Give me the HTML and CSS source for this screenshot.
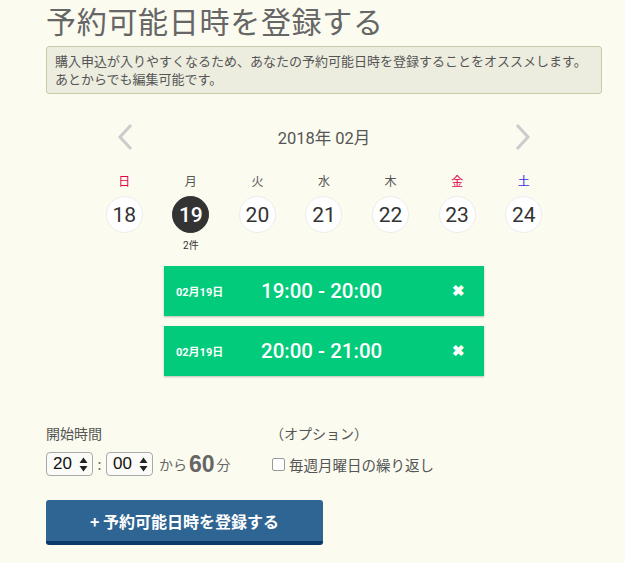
FILE: index.html
```html
<!DOCTYPE html>
<html lang="ja">
<head>
<meta charset="utf-8">
<title>予約可能日時を登録する</title>
<link rel="stylesheet" href="styles.css">
</head>
<body>
<div class="page">
  <h1 class="title">予約可能日時を登録する</h1>
  <div class="notice">購入申込が入りやすくなるため、あなたの予約可能日時を登録することをオススメします。<br>あとからでも編集可能です。</div>

  <div class="calendar">
    <div class="cal-head">
      <svg class="arrow" width="16" height="28" viewBox="0 0 16 28"><polyline points="14,2 3,14 14,26" fill="none" stroke="#cccccc" stroke-width="3"/></svg>
      <span class="month">2018年 02月</span>
      <svg class="arrow" width="16" height="28" viewBox="0 0 16 28"><polyline points="2,2 13,14 2,26" fill="none" stroke="#cccccc" stroke-width="3"/></svg>
    </div>
    <div class="days">
      <div class="day"><span class="wd sun">日</span><span class="num">18</span><span class="cnt"></span></div>
      <div class="day"><span class="wd">月</span><span class="num active">19</span><span class="cnt">2件</span></div>
      <div class="day"><span class="wd">火</span><span class="num">20</span><span class="cnt"></span></div>
      <div class="day"><span class="wd">水</span><span class="num">21</span><span class="cnt"></span></div>
      <div class="day"><span class="wd">木</span><span class="num">22</span><span class="cnt"></span></div>
      <div class="day"><span class="wd red">金</span><span class="num">23</span><span class="cnt"></span></div>
      <div class="day"><span class="wd sat">土</span><span class="num">24</span><span class="cnt"></span></div>
    </div>
    <div class="slots">
      <div class="slot"><span class="sdate">02月19日</span><span class="stime">19:00 - 20:00</span><span class="sdel">✖</span></div>
      <div class="slot"><span class="sdate">02月19日</span><span class="stime">20:00 - 21:00</span><span class="sdel">✖</span></div>
    </div>
  </div>

  <div class="form">
    <div class="col-left">
      <div class="label">開始時間</div>
      <div class="time-row">
        <div class="sel"><span>20</span><svg width="9" height="15" viewBox="0 0 9 15"><path d="M4.5 0.5 L8.5 6 L0.5 6 Z M4.5 14.5 L8.5 9 L0.5 9 Z" fill="#222"/></svg></div>
        <span class="colon">:</span>
        <div class="sel"><span>00</span><svg width="9" height="15" viewBox="0 0 9 15"><path d="M4.5 0.5 L8.5 6 L0.5 6 Z M4.5 14.5 L8.5 9 L0.5 9 Z" fill="#222"/></svg></div>
        <span class="kara">から</span><span class="dur">60</span><span class="fun">分</span>
      </div>
    </div>
    <div class="col-right">
      <div class="label">（オプション）</div>
      <label class="repeat"><span class="cb"></span>毎週月曜日の繰り返し</label>
    </div>
  </div>

  <button class="submit">+ 予約可能日時を登録する</button>
</div>
</body>
</html>
```
FILE: styles.css
```css
html, body {
  margin: 0;
  padding: 0;
  background: #fbfbef;
}
body {
  font-family: "Noto Sans CJK JP", "Noto Sans", sans-serif;
  color: #555;
}
.page {
  width: 556px;
  padding-left: 46px;
}
.title {
  margin: 0;
  font-size: 30px;
  font-weight: 400;
  line-height: 40px;
  letter-spacing: 0.7px;
  color: #666;
}
.notice {
  margin-top: 6px;
  border: 1px solid #c9c9a9;
  border-radius: 3px;
  background: #ececdf;
  padding: 5px 8px;
  font-size: 13px;
  line-height: 18px;
  color: #555;
}
.calendar {
  font-family: Roboto, "Noto Sans CJK JP", sans-serif;
}
.cal-head {
  width: 466px;
  margin: 26px auto 0;
  padding: 0 26px 0 26px;
  box-sizing: border-box;
  height: 34px;
  display: flex;
  align-items: center;
  justify-content: space-between;
}
.month {
  font-size: 16.5px;
  color: #555;
}
.days {
  width: 466px;
  margin: 20px auto 0;
  display: grid;
  grid-template-columns: repeat(7, 1fr);
}
.day {
  display: flex;
  flex-direction: column;
  align-items: center;
}
.wd {
  font-size: 12px;
  line-height: 16px;
  color: #555;
}
.wd.sun, .wd.red { color: #e8004a; }
.wd.sat { color: #3a2ee0; }
.num {
  margin-top: 6px;
  width: 37px;
  height: 37px;
  box-sizing: border-box;
  border-radius: 50%;
  background: #fff;
  border: 1px solid #ececec;
  display: flex;
  align-items: center;
  justify-content: center;
  font-size: 21px;
  color: #333;
}
.num.active {
  background: #333;
  border-color: #333;
  color: #fff;
  font-weight: 500;
}
.cnt {
  margin-top: 6px;
  height: 14px;
  font-size: 10px;
  line-height: 14px;
  color: #333;
}
.slots {
  width: 320px;
  margin: 13px auto 0;
  display: flex;
  flex-direction: column;
  gap: 10px;
}
.slot {
  height: 50px;
  background: #02cb7b;
  box-shadow: 0 1px 2px rgba(0, 0, 0, 0.25);
  display: flex;
  align-items: center;
  color: #fff;
  padding-left: 12px;
}
.sdate {
  width: 85px;
  font-size: 11px;
  font-weight: 700;
}
.stime {
  flex: 1;
  font-size: 20.5px;
  font-weight: 500;
}
.sdel {
  font-size: 15px;
  margin-right: 19px;
  font-weight: 700;
}
.form {
  margin-top: 48px;
  display: flex;
}
.col-left {
  width: 226px;
}
.label {
  font-size: 14px;
  line-height: 18px;
  color: #555;
}
.col-right .label {
  margin-left: -2px;
}
.time-row {
  margin-top: 10px;
  display: flex;
  align-items: center;
  height: 24px;
  color: #666;
}
.sel {
  width: 47px;
  height: 24px;
  box-sizing: border-box;
  border: 1px solid #a9a9a9;
  border-radius: 4px;
  background: #fbfbf7;
  display: flex;
  align-items: center;
  justify-content: space-between;
  padding: 0 4px 0 6px;
  font-family: "Liberation Sans", sans-serif;
  font-size: 17px;
  color: #111;
}
.colon {
  width: 13px;
  text-align: center;
  font-size: 14px;
  color: #666;
}
.kara {
  margin-left: 6px;
  font-size: 14px;
}
.dur {
  margin-left: 2px;
  font-family: "Liberation Sans", sans-serif;
  font-size: 23px;
  font-weight: 700;
  color: #666;
}
.fun {
  margin-left: 2px;
  font-size: 14px;
}
.repeat {
  margin-top: 10px;
  height: 24px;
  display: flex;
  align-items: center;
  font-size: 14.5px;
  color: #555;
}
.cb {
  width: 11px;
  height: 11px;
  border: 1px solid #999;
  border-radius: 2px;
  background: #fff;
  margin-right: 4px;
}
.submit {
  display: block;
  margin-top: 24px;
  width: 277px;
  height: 45px;
  border: none;
  border-bottom: 4px solid #0b3a68;
  border-radius: 3px;
  background: #2f6592;
  color: #fff;
  font-family: "Noto Sans CJK JP", sans-serif;
  font-size: 16px;
  font-weight: 700;
  padding: 0;
}
```
